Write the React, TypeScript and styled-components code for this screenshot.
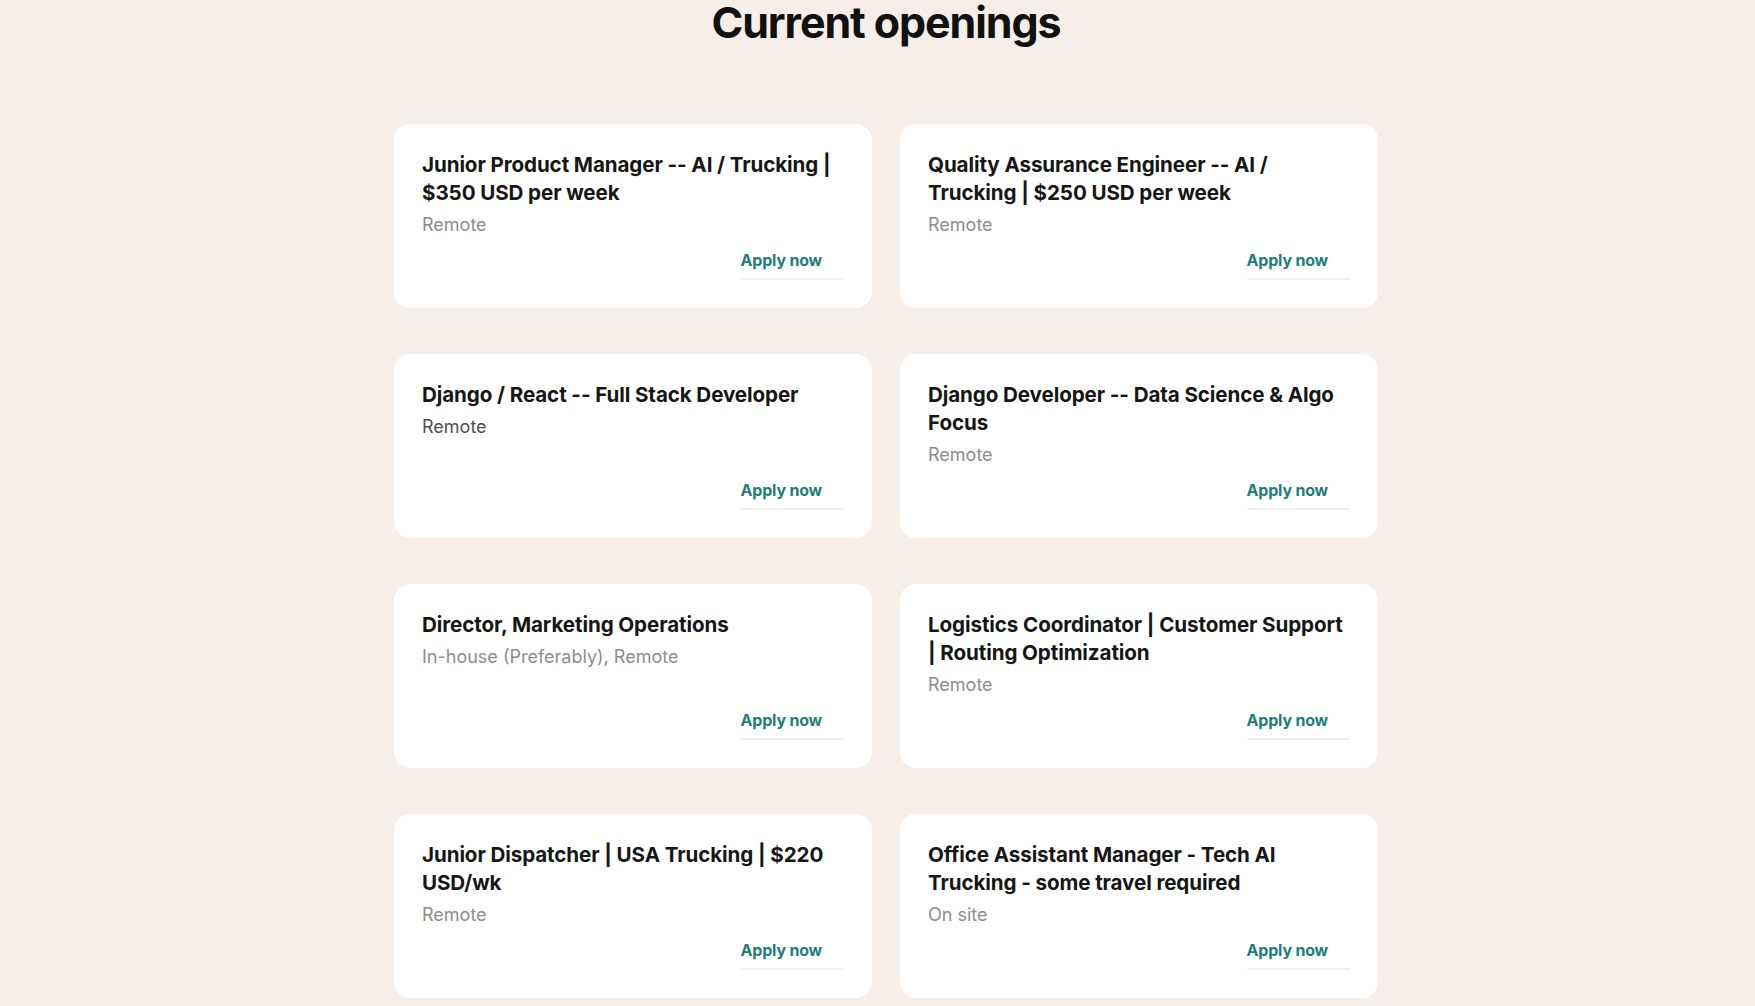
import React from "react";
import styled, { createGlobalStyle } from "styled-components";

const GlobalStyle = createGlobalStyle`
  html, body {
    margin: 0;
    background: #f6efe9;
  }
  body {
    font-family: Inter, "Liberation Sans", sans-serif;
    color: #161616;
  }
`;

type Job = {
  title: string;
  location: string;
  strong?: boolean;
};

const jobs: Job[] = [
  { title: "Junior Product Manager -- AI / Trucking | $350 USD per week", location: "Remote" },
  { title: "Quality Assurance Engineer -- AI / Trucking | $250 USD per week", location: "Remote" },
  { title: "Django / React -- Full Stack Developer", location: "Remote", strong: true },
  { title: "Django Developer -- Data Science & Algo Focus", location: "Remote" },
  { title: "Director, Marketing Operations", location: "In-house (Preferably), Remote" },
  { title: "Logistics Coordinator | Customer Support | Routing Optimization", location: "Remote" },
  { title: "Junior Dispatcher | USA Trucking | $220 USD/wk", location: "Remote" },
  { title: "Office Assistant Manager - Tech AI Trucking - some travel required", location: "On site" },
];

const App = () => {
  return (
    <>
      <GlobalStyle />
      <Page>
        <Heading>Current openings</Heading>
        <Grid>
          {jobs.map((job) => (
            <Card key={job.title}>
              <Title>{job.title}</Title>
              <Location $strong={job.strong}>{job.location}</Location>
              <ApplyLink href="#">Apply now</ApplyLink>
            </Card>
          ))}
        </Grid>
      </Page>
    </>
  );
};

export default App;

const Page = styled.main`
  display: flex;
  flex-direction: column;
  align-items: center;
  padding-left: 17px;
  padding-bottom: 40px;
`;

const Heading = styled.h1`
  margin: 0;
  font-size: 43px;
  line-height: 44px;
  font-weight: 700;
  letter-spacing: -1.1px;
  color: #111;
`;

const Grid = styled.section`
  margin-top: 80px;
  display: grid;
  grid-template-columns: repeat(2, 478px);
  column-gap: 28px;
  row-gap: 46px;
`;

const Card = styled.article`
  box-sizing: border-box;
  height: 184px;
  padding: 27px 28px 28px;
  background: #fff;
  border-radius: 16px;
  display: flex;
  flex-direction: column;
`;

const Title = styled.h3`
  margin: 0;
  font-size: 20.6px;
  line-height: 28px;
  font-weight: 700;
  letter-spacing: -0.1px;
  color: #161616;
`;

const Location = styled.p<{ $strong?: boolean }>`
  margin: 6px 0 0;
  font-size: 18px;
  line-height: 24px;
  color: ${(p) => (p.$strong ? "#4f4f4f" : "#8d8d8d")};
`;

const ApplyLink = styled.a`
  margin-top: auto;
  align-self: flex-end;
  padding: 0 22px 8px 0;
  border-bottom: 2px solid #f1f1f1;
  font-size: 16px;
  line-height: 20px;
  font-weight: 700;
  letter-spacing: -0.2px;
  color: #1f7d7a;
  text-decoration: none;
`;
